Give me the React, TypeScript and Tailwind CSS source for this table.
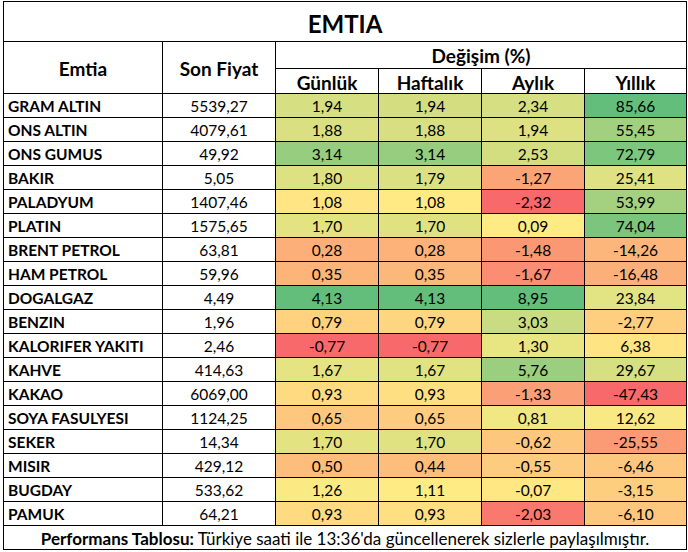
import React from "react";

type Row = [string, string, number, number, number, number];

const rows: Row[] = [
  ["GRAM ALTIN", "5539,27", 1.94, 1.94, 2.34, 85.66],
  ["ONS ALTIN", "4079,61", 1.88, 1.88, 1.94, 55.45],
  ["ONS GUMUS", "49,92", 3.14, 3.14, 2.53, 72.79],
  ["BAKIR", "5,05", 1.8, 1.79, -1.27, 25.41],
  ["PALADYUM", "1407,46", 1.08, 1.08, -2.32, 53.99],
  ["PLATIN", "1575,65", 1.7, 1.7, 0.09, 74.04],
  ["BRENT PETROL", "63,81", 0.28, 0.28, -1.48, -14.26],
  ["HAM PETROL", "59,96", 0.35, 0.35, -1.67, -16.48],
  ["DOGALGAZ", "4,49", 4.13, 4.13, 8.95, 23.84],
  ["BENZIN", "1,96", 0.79, 0.79, 3.03, -2.77],
  ["KALORIFER YAKITI", "2,46", -0.77, -0.77, 1.3, 6.38],
  ["KAHVE", "414,63", 1.67, 1.67, 5.76, 29.67],
  ["KAKAO", "6069,00", 0.93, 0.93, -1.33, -47.43],
  ["SOYA FASULYESI", "1124,25", 0.65, 0.65, 0.81, 12.62],
  ["SEKER", "14,34", 1.7, 1.7, -0.62, -25.55],
  ["MISIR", "429,12", 0.5, 0.44, -0.55, -6.46],
  ["BUGDAY", "533,62", 1.26, 1.11, -0.07, -3.15],
  ["PAMUK", "64,21", 0.93, 0.93, -2.03, -6.1],
];

const RED = [248, 105, 107];
const YEL = [255, 235, 132];
const GRN = [99, 190, 123];

function mix(a: number[], b: number[], t: number) {
  const c = a.map((v, i) => Math.round(v + (b[i] - v) * t));
  return `rgb(${c[0]},${c[1]},${c[2]})`;
}

function scale(col: number[]) {
  const s = [...col].sort((a, b) => a - b);
  const min = s[0];
  const max = s[s.length - 1];
  const pos = 0.5 * (s.length - 1);
  const lo = Math.floor(pos);
  const mid = s[lo] + (s[lo + 1] - s[lo]) * (pos - lo);
  return (v: number) => {
    if (v <= mid) {
      const t = mid === min ? 1 : (v - min) / (mid - min);
      return mix(RED, YEL, t);
    }
    const t = max === mid ? 0 : (v - mid) / (max - mid);
    return mix(YEL, GRN, t);
  };
}

const scales = [2, 3, 4, 5].map((i) => scale(rows.map((r) => r[i] as number)));

const fmt = (v: number) => v.toFixed(2).replace(".", ",");

const font = { fontFamily: "Lato, 'Open Sans', sans-serif" };

export default function App() {
  return (
    <div className="w-[688px] h-[552px] bg-white" style={font}>
      <div className="ml-[3px] mt-px inline-grid grid-cols-[158px_112px_102px_102px_102px_101px] grid-rows-[39px_26px_24px_repeat(18,23px)_23px] gap-px bg-black p-px text-black">
        <div className="col-span-6 bg-white flex items-center justify-center pt-[4px] text-[24px] leading-none font-bold">
          EMTIA
        </div>
        <div className="row-span-2 bg-white flex items-center justify-center pt-[2px] text-[19px] leading-none font-bold">
          Emtia
        </div>
        <div className="row-span-2 bg-white flex items-center justify-center pt-[2px] text-[19px] leading-none font-bold">
          Son Fiyat
        </div>
        <div className="col-span-4 bg-white flex items-center justify-center pt-[1px] text-[19px] leading-none font-bold">
          Değişim (%)
        </div>
        {["Günlük", "Haftalık", "Aylık", "Yıllık"].map((h) => (
          <div key={h} className="bg-white flex items-center justify-center pt-[3px] text-[19px] leading-none font-bold">
            {h}
          </div>
        ))}
        {rows.map((r) => (
          <React.Fragment key={r[0]}>
            <div className="bg-white flex items-center pl-[4px] pt-[2px] text-[15.5px] leading-none font-bold whitespace-nowrap">
              {r[0]}
            </div>
            <div className="bg-white flex items-center justify-center pt-[2px] text-[15.5px] leading-none">
              {r[1]}
            </div>
            {[2, 3, 4, 5].map((i) => (
              <div
                key={i}
                className="flex items-center justify-center pt-[2px] text-[15.5px] leading-none"
                style={{ backgroundColor: scales[i - 2](r[i] as number) }}
              >
                {fmt(r[i] as number)}
              </div>
            ))}
          </React.Fragment>
        ))}
        <div className="col-span-6 bg-white flex items-center justify-center pt-[2px] text-[17px] leading-none whitespace-nowrap">
          <span className="font-bold">Performans Tablosu:</span>
          <span>&nbsp;Türkiye saati ile 13:36'da güncellenerek sizlerle paylaşılmıştır.</span>
        </div>
      </div>
    </div>
  );
}
